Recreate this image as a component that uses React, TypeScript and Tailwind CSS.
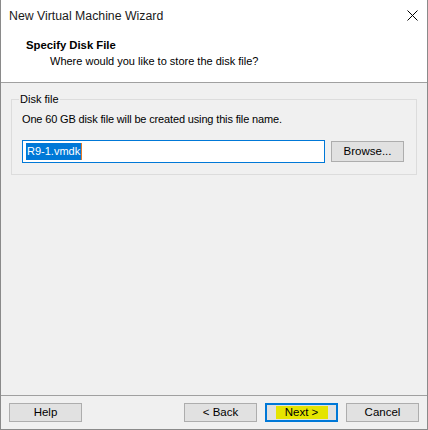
// 새 가상 머신 마법사 — 디스크 파일 지정 단계
const font = { fontFamily: '"Liberation Sans", Arial, sans-serif' };

function WinButton({ label, focused }: { label: React.ReactNode; focused?: boolean }) {
  return (
    <button
      type="button"
      className={
        'flex h-[19px] w-[73px] items-center justify-center bg-[#e1e1e1] text-[11.5px] leading-none text-black ' +
        (focused ? 'border-2 border-[#0078d7]' : 'border border-[#adadad]')
      }
    >
      {label}
    </button>
  );
}

export default function App() {
  return (
    <div
      className="flex h-[430px] w-[428px] flex-col border-x border-b border-[#8a8a8a] bg-[#f0f0f0] text-[11px] text-black"
      style={font}
    >
      {/* 타이틀 바 */}
      <div className="flex h-[31px] items-center justify-between bg-white pl-[8px] pr-[9px]">
        <span className="pt-[1px] text-[12.3px] text-[#1a1a1a]">New Virtual Machine Wizard</span>
        <svg width="11" height="11" viewBox="0 0 11 11" className="text-black">
          <path d="M0.5 0.5 L10.5 10.5 M10.5 0.5 L0.5 10.5" stroke="currentColor" strokeWidth="1" />
        </svg>
      </div>

      {/* 단계 헤더 */}
      <div className="flex h-[52px] flex-col border-b border-[#a0a0a0] bg-white pl-[25px] pt-[7px]">
        <p className="text-[11.3px] font-bold leading-[15px]">Specify Disk File</p>
        <p className="pl-[24px] pt-[1px] leading-[15px]">Where would you like to store the disk file?</p>
      </div>

      {/* 본문 */}
      <div className="flex-1 px-[10px] pt-[9px]">
        <fieldset className="h-[83px] border border-[#dcdcdc] px-[10px]">
          <legend className="ml-[-3px] px-[1px] leading-[14px]">Disk file</legend>
          <p className="pt-[6px] leading-[15px] tracking-[-0.15px]">
            One 60 GB disk file will be created using this file name.
          </p>
          <div className="mt-[13px] flex items-center gap-[6px]">
            <div className="flex h-[23px] w-[303px] items-center border border-[#0078d7] bg-white pl-[3px]">
              <span className="bg-[#0078d7] px-[1px] leading-[17px] text-white">R9-1.vmdk</span>
              <span className="h-[17px] w-[1px] bg-[#e07a2a]" />
            </div>
            <button
              type="button"
              className="flex h-[21px] w-[73px] items-center justify-center border border-[#adadad] bg-[#e1e1e1] text-[11.5px]"
            >
              Browse...
            </button>
          </div>
        </fieldset>
      </div>

      {/* 하단 버튼 */}
      <div className="flex h-[34px] items-center border-t border-[#a0a0a0] px-[8px]">
        <WinButton label="Help" />
        <div className="flex-1" />
        <div className="flex gap-[8px]">
          <WinButton label="< Back" />
          <WinButton
            focused
            label={<span className="flex h-[13px] w-[52px] items-center justify-center bg-[#e5e400]">Next &gt;</span>}
          />
          <WinButton label="Cancel" />
        </div>
      </div>
    </div>
  );
}
